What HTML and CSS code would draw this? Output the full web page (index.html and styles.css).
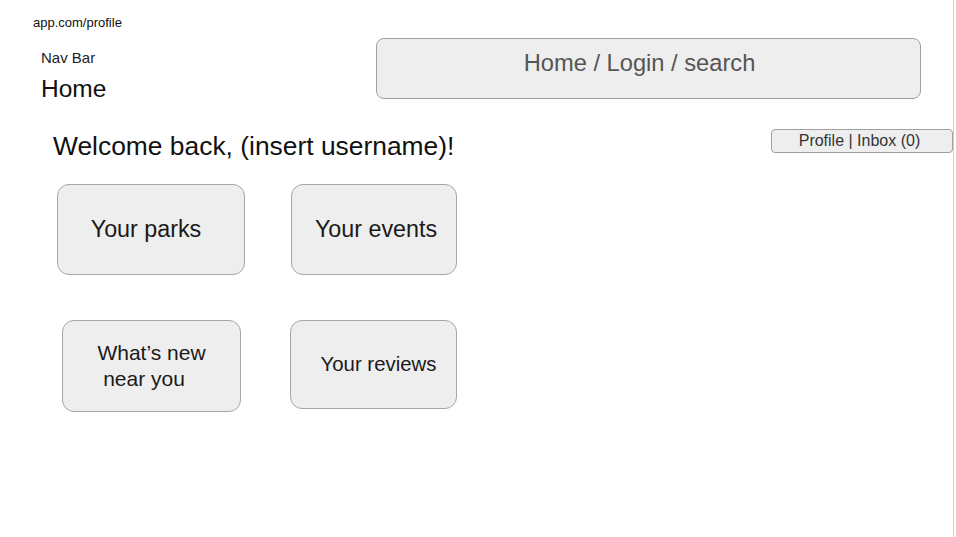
FILE: index.html
```html
<!DOCTYPE html>
<html lang="en">
<head>
<meta charset="utf-8">
<title>Profile</title>
<link rel="stylesheet" href="styles.css">
</head>
<body>
<div class="frame">
  <header class="top">
    <div class="brand">
      <div class="url">app.com/profile</div>
      <div class="nav-label">Nav Bar</div>
      <div class="home">Home</div>
    </div>
    <div class="search">Home / Login / search</div>
  </header>
  <section class="welcome-row">
    <h1 class="welcome">Welcome back, (insert username)!</h1>
    <div class="profile-btn">Profile | Inbox (0)</div>
  </section>
  <main class="cards">
    <div class="card card-parks">Your parks</div>
    <div class="card card-events">Your events</div>
    <div class="card card-new"><span class="l1">What’s new</span><span class="l2">near you</span></div>
    <div class="card card-reviews">Your reviews</div>
  </main>
</div>
</body>
</html>
```
FILE: styles.css
```css
html, body {
  margin: 0;
  padding: 0;
  background: #ffffff;
}
body {
  font-family: "Liberation Sans", Arial, sans-serif;
  color: #1a1a1a;
}
.frame {
  width: 953px;
  height: 537px;
  border-right: 1px solid #cfcfcf;
  box-sizing: content-box;
  overflow: hidden;
}
.top {
  display: flex;
  align-items: flex-start;
  padding: 15px 0 0 33px;
}
.brand {
  width: 343px;
  display: flex;
  flex-direction: column;
}
.url {
  font-size: 13px;
  line-height: 15px;
  color: #111;
}
.nav-label {
  margin: 19px 0 0 8px;
  font-size: 15px;
  line-height: 17px;
  color: #222;
}
.home {
  margin: 9px 0 0 8px;
  font-size: 24.5px;
  line-height: 28px;
  color: #111;
}
.search {
  margin-top: 23px;
  width: 545px;
  height: 61px;
  box-sizing: border-box;
  padding: 10px 18px 0 0;
  background: #eeeeee;
  border: 1.5px solid #a0a0a0;
  border-radius: 8px;
  text-align: center;
  font-size: 23.7px;
  line-height: 28px;
  color: #555555;
}
.welcome-row {
  display: flex;
  justify-content: space-between;
  align-items: flex-start;
  margin-top: 26px;
  padding-left: 53px;
}
.welcome {
  margin: 1px 0 0 0;
  font-weight: normal;
  font-size: 26.4px;
  line-height: 32px;
  color: #111;
}
.profile-btn {
  width: 182px;
  height: 24px;
  box-sizing: border-box;
  padding-right: 5px;
  background: #eeeeee;
  border: 1.5px solid #a0a0a0;
  border-radius: 4px;
  text-align: center;
  font-size: 16px;
  line-height: 21px;
  color: #333;
}
.cards {
  display: grid;
  grid-template-columns: 234px auto;
  row-gap: 45px;
  margin-top: 22px;
  padding-left: 57px;
  align-items: start;
  justify-items: start;
}
.card {
  box-sizing: border-box;
  display: flex;
  flex-direction: column;
  align-items: center;
  justify-content: center;
  background: #eeeeee;
  border: 1.5px solid #a6a6a6;
  border-radius: 12px;
  color: #1a1a1a;
  text-align: center;
}
.card-parks {
  width: 188px;
  height: 91px;
  padding-right: 10px;
  font-size: 23.3px;
}
.card-events {
  width: 166px;
  height: 91px;
  padding-left: 4px;
  font-size: 23.3px;
}
.card-new {
  margin-left: 5px;
  width: 179px;
  height: 92px;
  font-size: 21px;
  line-height: 26px;
}
.card-new .l1,
.card-new .l2 {
  display: block;
}
.card-new .l2 {
  padding-right: 15px;
}
.card-reviews {
  margin-left: -1px;
  width: 167px;
  height: 89px;
  padding-left: 10px;
  font-size: 20.4px;
}
```
